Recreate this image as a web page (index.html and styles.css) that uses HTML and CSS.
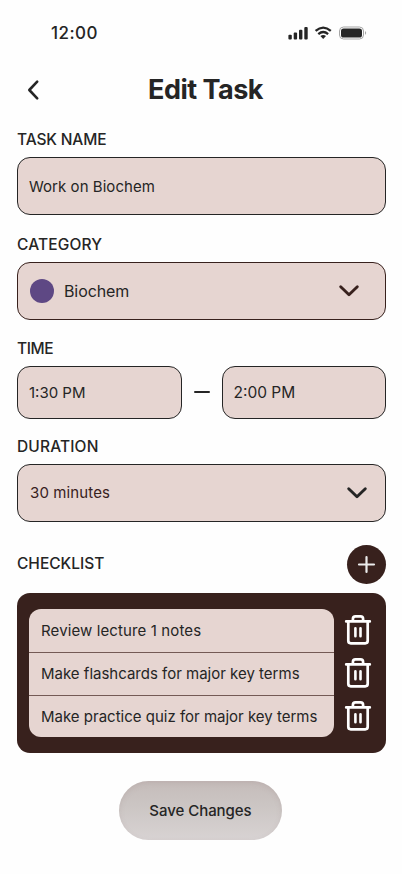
FILE: index.html
```
<!DOCTYPE html>
<html lang="en">
<head>
<meta charset="utf-8">
<meta name="viewport" content="width=device-width, initial-scale=1">
<title>Edit Task</title>
<link rel="stylesheet" href="styles.css">
</head>
<body>
<svg width="0" height="0" class="defs" aria-hidden="true">
  <symbol id="trash" viewBox="0 0 28 32">
    <g fill="none" stroke="#fff" stroke-width="2.7" stroke-linecap="round" stroke-linejoin="round">
      <path d="M2.2 7.4H25.8M4.3 7.4V26.8Q4.3 29.3 6.8 29.3H21.2Q23.7 29.3 23.7 26.8V7.4M8.9 7.2V4.9Q8.9 2.3 11.5 2.3H16.5Q19.1 2.3 19.1 4.9V7.2"/>
      <path stroke-width="2.6" d="M11.4 14.3V22.3M16.5 14.3V22.3"/>
    </g>
  </symbol>
  <symbol id="chevron" viewBox="0 0 22 14">
    <path d="M2.7 2.8L11 10.8L19.3 2.8" fill="none" stroke="currentColor" stroke-width="2.9" stroke-linecap="round" stroke-linejoin="round"/>
  </symbol>
</svg>
<main class="screen">
  <div class="status">
    <span class="clock">12:00</span>
    <svg class="indicators" width="80" height="16" viewBox="0 0 80 16" fill="#252525">
      <rect x="0.4" y="9.8" width="3.4" height="4.6" rx="1"/>
      <rect x="5.7" y="7.4" width="3.4" height="7" rx="1"/>
      <rect x="11" y="4.8" width="3.4" height="9.6" rx="1"/>
      <rect x="16.3" y="2" width="3.4" height="12.4" rx="1"/>
      <g fill="none" stroke="#252525" stroke-width="2.3">
        <path d="M27.6 5.9Q35.2 -0.7 42.8 5.9"/>
        <path d="M30.3 9.1Q35.2 4.9 40.1 9.1"/>
      </g>
      <path d="M32.4 11Q35.2 8.8 38 11L35.2 14Z"/>
      <rect x="51.5" y="2" width="24" height="12" rx="4" fill="none" stroke="#a5a5a5"/>
      <rect x="53" y="3.5" width="21" height="9" rx="2.6"/>
      <path d="M77 6.1Q79.4 8 77 9.9Z" fill="#a5a5a5"/>
    </svg>
  </div>
  <header class="header">
    <svg class="back" width="16" height="22" viewBox="0 0 16 22"><path d="M11.2 2.7L3.3 11L11.2 19.3" fill="none" stroke="#252525" stroke-width="2.6" stroke-linecap="round" stroke-linejoin="round"/></svg>
    <h1 class="title">Edit Task</h1>
  </header>

  <section class="group">
    <h2 class="label label-task">TASK NAME</h2>
    <div class="field field-name">Work on Biochem</div>
  </section>
  <section class="group group-category">
    <h2 class="label label-category">CATEGORY</h2>
    <div class="field field-category"><span class="dot"></span><span class="category">Biochem</span><svg class="chevron chevron-brown" width="22" height="14"><use href="#chevron"/></svg></div>
  </section>
  <section class="group group-time">
    <h2 class="label label-time">TIME</h2>
    <div class="times">
      <div class="field time">1:30 PM</div>
      <span class="dash"></span>
      <div class="field time time-end">2:00 PM</div>
    </div>
  </section>
  <section class="group group-duration">
    <h2 class="label label-duration">DURATION</h2>
    <div class="field field-duration"><span class="duration">30 minutes</span><svg class="chevron" width="22" height="14"><use href="#chevron"/></svg></div>
  </section>

  <section class="checklist">
    <div class="checklist-head">
      <h2 class="label label-checklist">CHECKLIST</h2>
      <button class="add" aria-label="Add item"><svg width="19" height="19" viewBox="0 0 19 19"><path d="M9.5 2V17M2 9.5H17" fill="none" stroke="#ececec" stroke-width="2.2" stroke-linecap="round"/></svg></button>
    </div>
    <div class="panel">
      <ul class="items">
        <li class="item item-a">Review lecture 1 notes</li>
        <li class="item">Make flashcards for major key terms</li>
        <li class="item">Make practice quiz for major key terms</li>
      </ul>
      <div class="bins">
        <svg width="28" height="32"><use href="#trash"/></svg>
        <svg width="28" height="32"><use href="#trash"/></svg>
        <svg width="28" height="32"><use href="#trash"/></svg>
      </div>
    </div>
  </section>
  <button class="save">Save Changes</button>
</main>
</body>
</html>
```
FILE: styles.css
```
* { box-sizing: border-box; margin: 0; padding: 0; }
body { background: #fefefe; color: #252525; font-family: Inter, "Liberation Sans", sans-serif; font-size: 15px; font-weight: 400; }
.defs { display: block; position: absolute; }
.screen { width: 402px; height: 874px; padding: 0 16px 0 17px; display: flex; flex-direction: column; overflow: hidden; }
.status { display: flex; justify-content: space-between; align-items: center; height: 20px; margin: 23px 18px 0 34px; }
.clock { font-size: 17px; font-weight: 500; letter-spacing: 0.45px; }
.indicators { display: block; }
.header { display: grid; grid-template-columns: 32px 1fr 32px; align-items: center; height: 36px; margin-top: 29px; margin-bottom: 23px; }
.back { margin: -1px 0 0 9px; display: block; }
.title { font-size: 27px; line-height: 36px; font-weight: 700; letter-spacing: -0.5px; text-align: center; padding-left: 8px; white-space: nowrap; }
.label { font-size: 15.5px; font-weight: 500; line-height: 18px; margin-bottom: 8px; }
.label-task { letter-spacing: -0.15px; }
.label-category { letter-spacing: 0.15px; }
.label-time { letter-spacing: -0.4px; }
.label-duration { letter-spacing: 0.15px; }
.field { height: 58px; border: 1px solid #252525; border-radius: 13px; background: #e6d5d1; display: flex; align-items: center; padding: 0 11px; }
.field-name { letter-spacing: 0.05px; }
.group-category { margin-top: 21px; }
.field-category { padding: 0 25px 0 12px; border-color: #38211d; }
.dot { width: 24px; height: 24px; border-radius: 50%; background: #5e4884; margin-right: 10px; }
.category { font-size: 16px; letter-spacing: -0.1px; }
.chevron { margin-left: auto; display: block; }
.chevron-brown { color: #38211d; }
.group-time { margin-top: 19.5px; }
.times { display: flex; align-items: center; justify-content: space-between; }
.time { width: 164.5px; height: 53px; }
.time-end { font-size: 15.5px; }
.dash { width: 16px; height: 2px; border-radius: 1px; background: #252525; }
.group-duration { margin-top: 19px; }
.field-duration { padding: 0 17px 0 12px; }
.duration { color: #38211d; letter-spacing: 0.12px; }
.checklist { margin-top: 23px; }
.checklist-head { display: flex; align-items: center; justify-content: space-between; height: 39px; }
.label-checklist { margin: 0; }
.add { width: 39px; height: 39px; border: 0; border-radius: 50%; background: #38211d; display: grid; place-items: center; }
.panel { height: 160px; margin-top: 9px; padding: 16px 14px 16px 12px; border-radius: 13px; background: #38211d; display: flex; justify-content: space-between; }
.items { width: 305px; list-style: none; background: #e6d5d1; border-radius: 12px; overflow: hidden; }
.item { height: 43px; padding-left: 12px; display: flex; align-items: center; white-space: nowrap; }
.item + .item { border-top: 1px solid #745a55; }
.item-a { letter-spacing: 0.12px; }
.bins { display: flex; flex-direction: column; gap: 11px; padding-top: 5.5px; }
.bins svg { display: block; }
.save { align-self: center; width: 163px; height: 59px; margin: 28.5px 0 0 -2px; border: 0; border-radius: 30px; background: linear-gradient(#c5bcba, #cbc5c3 40%, #d8d3d3); box-shadow: inset 0 2px 5px rgba(165, 145, 145, 0.25); color: #252525; font: 550 15px Inter, "Liberation Sans", sans-serif; letter-spacing: -0.05px; }
```
